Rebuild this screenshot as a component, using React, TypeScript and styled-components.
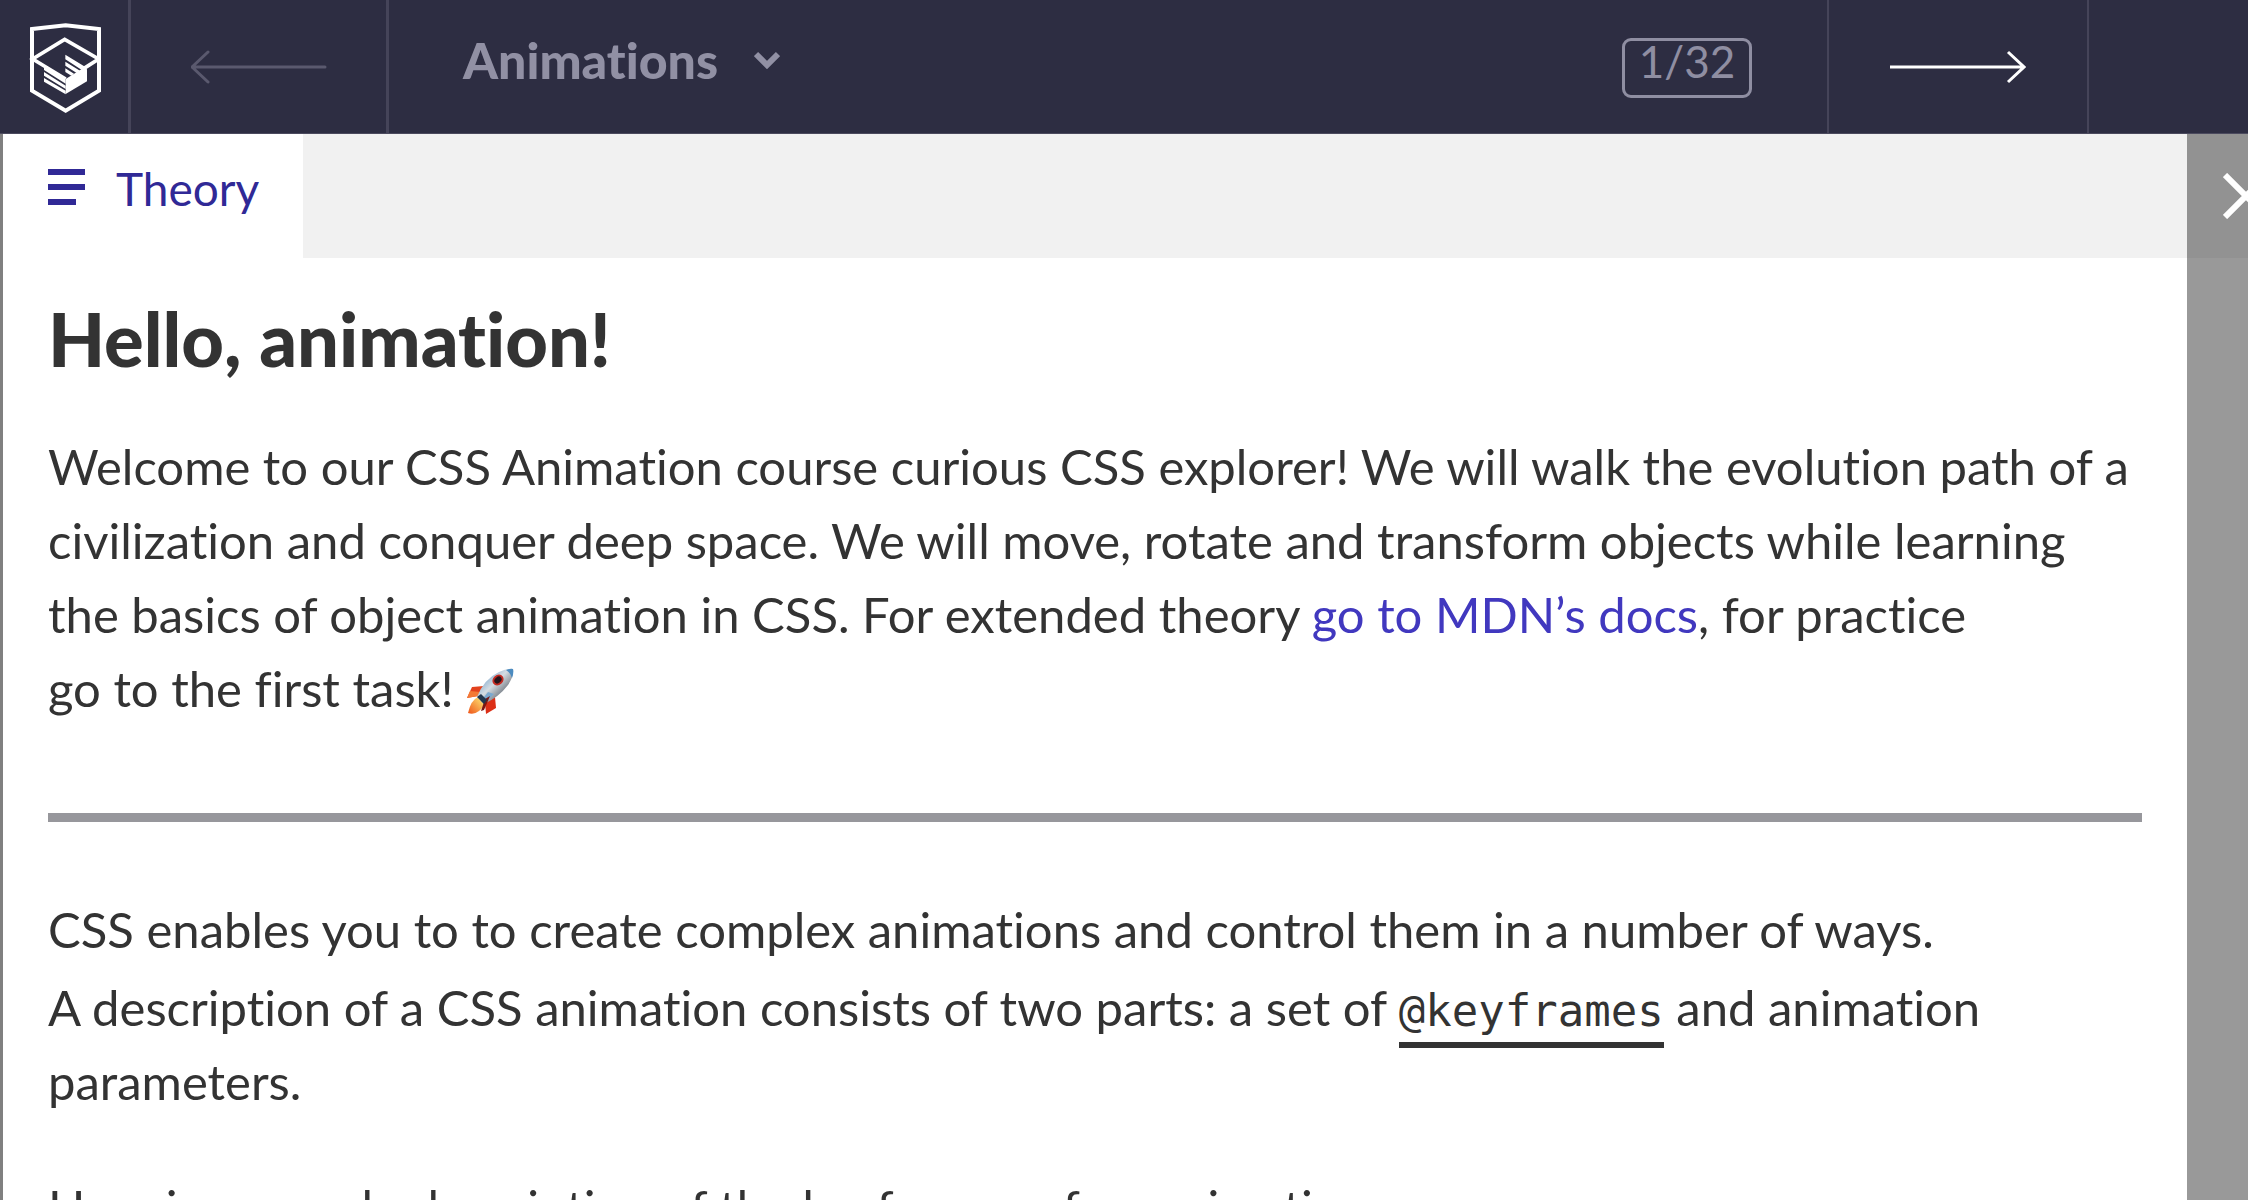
import React from "react";
import styled, { createGlobalStyle } from "styled-components";

const GlobalStyle = createGlobalStyle`
  *, *::before, *::after { box-sizing: border-box; }
  body {
    margin: 0;
    background: #999999;
    color: #333333;
    font-family: Lato, "Open Sans", sans-serif;
    font-variant-ligatures: none;
  }
`;

const Page = styled.div`
  display: flex;
  flex-direction: column;
  height: 100vh;
  overflow: hidden;
`;

const Header = styled.header`
  display: flex;
  flex: none;
  height: 134px;
  background: #2d2d42;
  border-bottom: 1px solid #4b4a5e;
`;

const HeaderLink = styled.a<{ $width: number; $bothSides?: boolean; $muted?: boolean }>`
  display: flex;
  flex: none;
  align-items: center;
  justify-content: center;
  width: ${(p) => p.$width}px;
  color: ${(p) => (p.$muted ? "#5a596e" : "#ffffff")};
  border: solid #454459;
  border-width: ${(p) => (p.$bothSides ? "0 2px" : "0 3px 0 0")};
`;

const CourseBar = styled.div`
  display: flex;
  flex: 1;
  align-items: flex-start;
  justify-content: space-between;
  min-width: 0;
  padding: 38px 75px 0 74px;
`;

const CourseButton = styled.button`
  display: flex;
  align-items: center;
  gap: 36px;
  padding: 0;
  border: 0;
  background: none;
  color: #9190a4;
  font: 900 50px/44px Lato, sans-serif;
  font-variant-ligatures: none;
  cursor: pointer;
`;

const Counter = styled.span`
  width: 130px;
  height: 60px;
  border: 3px solid #8f8ea2;
  border-radius: 9px;
  color: #8f8ea2;
  font-size: 44px;
  line-height: 40px;
  text-align: center;
`;

const HeaderEnd = styled.div`
  flex: none;
  width: 159px;
`;

const Workspace = styled.div`
  display: flex;
  flex: 1;
  min-height: 0;
`;

const Edge = styled.div`
  flex: none;
  width: 3px;
  background: #808080;
`;

const Panel = styled.main`
  flex: 1;
  min-width: 0;
  overflow: hidden;
  background: #ffffff;
`;

const TabBar = styled.div`
  display: flex;
  height: 124px;
  background: #f1f1f1;
`;

const Tab = styled.button`
  display: flex;
  align-items: flex-start;
  gap: 31px;
  padding: 33px 44px 0 45px;
  border: 0;
  background: #ffffff;
  color: #302996;
  font: 400 46px/44px Lato, sans-serif;
  cursor: pointer;

  svg { margin-top: 2px; }
`;

const Article = styled.article`
  padding: 46px 45px;
  font-size: 49px;
  line-height: 74px;
`;

const Title = styled.h1`
  margin: 0 0 55px;
  font-size: 74px;
  font-weight: 900;
  line-height: 70px;
`;

const Paragraph = styled.p`
  margin: 0 0 52px;
`;

const Rule = styled.hr`
  height: 9px;
  margin: 88px 0 70px;
  border: 0;
  background: #97979c;
`;

const DocsLink = styled.a`
  color: #4138bf;
  text-decoration: none;
`;

const Code = styled.code`
  display: inline-block;
  margin-bottom: -10px;
  padding: 23px 0 9px;
  border-bottom: 6px solid #333333;
  font-family: "DejaVu Sans Mono", monospace;
  font-size: 44px;
  line-height: 44px;
`;

const RocketIcon = styled.svg`
  width: 48px;
  height: 48px;
  vertical-align: -8px;
`;

const SideBar = styled.aside`
  flex: none;
  width: 61px;
  overflow: hidden;
  background: #999999;
`;

const CloseButton = styled.button`
  display: flex;
  align-items: flex-start;
  width: 100%;
  height: 124px;
  padding: 39px 0 0 36px;
  border: 0;
  background: #929292;
  color: #ffffff;
  cursor: pointer;

  svg { flex: none; }
`;

function Logo() {
  return (
    <svg width="74" height="92" viewBox="81 62 222 276" fill="none" aria-hidden="true">
      <path d="M96 86 L197 75 L297 86 V271 L197 331 L96 271 Z" stroke="#fff" strokeWidth="12" />
      <path d="M252 204 L296 176 L194 117 L98 176 L197 236" stroke="#fff" strokeWidth="11" />
      <path d="M197 236 L250 203 L261 207 V243 L197 281 Z" fill="#fff" />
      <path d="M196 163 L260 202 L250 212 L196 177 Z M196 184 L240 211 L230 218 L196 196 Z M196 204 L222 220 L214 226 L196 215 Z" fill="#fff" />
      <path d="M132 198 L197 238 V250 L132 209 Z M132 215 L197 256 V266 L132 226 Z M132 233 L197 271 V282 L132 244 Z" fill="#fff" />
    </svg>
  );
}

function Arrow({ back }: { back?: boolean }) {
  return (
    <svg width="136" height="34" viewBox="0 0 136 34" fill="none" stroke="currentColor" strokeWidth="3" aria-hidden="true">
      {back ? <path d="M17 2 L1 17 L17 32 M1 17 H134" strokeLinecap="round" /> : <path d="M118 2 L134 17 L118 32 M0 17 H134" />}
    </svg>
  );
}

function Rocket() {
  return (
    <RocketIcon viewBox="0 0 48 48" role="img" aria-label="rocket">
      <defs>
        <linearGradient id="hull" x1="0" y1="0" x2="1" y2="1">
          <stop offset="0.1" stopColor="#5f97c8" />
          <stop offset="0.45" stopColor="#d5dce2" />
          <stop offset="0.65" stopColor="#8d949c" />
          <stop offset="1" stopColor="#3d4a58" />
        </linearGradient>
        <linearGradient id="flame" x1="1" y1="0" x2="0" y2="1">
          <stop offset="0" stopColor="#fff07a" />
          <stop offset="1" stopColor="#ef5318" />
        </linearGradient>
      </defs>
      <path d="M18 19 L6 20 L1 31 L12 29 Z" fill="#e3421d" />
      <path d="M1 31 L4 24 L14 25 L12 29 Z" fill="#f47a35" />
      <path d="M29 30 L30 41 L20 47 L19 36 Z" fill="#dc2f16" />
      <path d="M12 30 Q5 33 2 46 Q8 48 13 44 Q18 40 18 36 Z" fill="url(#flame)" />
      <path d="M11 30 Q18 12 33 5 Q41 1 47 2 Q48 9 42 18 Q33 30 18 37 Z" fill="url(#hull)" />
      <path d="M40 3 Q45 1 47 2 Q48 6 46 11 Q45 6 40 3 Z" fill="#4c8bc0" />
      <path d="M22 25 L28 27 L18 37 L15 34 Z" fill="#7ba8ce" />
      <path d="M19 32 L24 29 L18 43 L15 44 Z" fill="#7b1712" />
      <ellipse cx="32" cy="13" rx="6" ry="5" fill="#c42b22" transform="rotate(-40 32 13)" />
      <ellipse cx="32" cy="13" rx="4" ry="3" fill="#25141a" transform="rotate(-40 32 13)" />
      <path d="M11 30 L15 27 L21 33 L18 37 Z" fill="#23364c" />
    </RocketIcon>
  );
}

export default function App() {
  return (
    <Page>
      <GlobalStyle />
      <Header>
        <HeaderLink href="#home" aria-label="Home" $width={131}>
          <Logo />
        </HeaderLink>
        <HeaderLink href="#previous" aria-label="Previous" $width={258} $muted>
          <Arrow back />
        </HeaderLink>
        <CourseBar>
          <CourseButton type="button">
            Animations
            <svg width="26" height="18" viewBox="0 0 26 18" fill="none" aria-hidden="true">
              <path d="M2 3 L13 14 L24 3" stroke="currentColor" strokeWidth="6" />
            </svg>
          </CourseButton>
          <Counter>1/32</Counter>
        </CourseBar>
        <HeaderLink href="#next" aria-label="Next" $width={262} $bothSides>
          <Arrow />
        </HeaderLink>
        <HeaderEnd />
      </Header>
      <Workspace>
        <Edge />
        <Panel>
          <TabBar role="tablist">
            <Tab type="button" role="tab" aria-selected="true">
              <svg width="37" height="36" viewBox="0 0 37 36" fill="currentColor" aria-hidden="true">
                <path d="M0 0 H37 V6 H0 Z M0 15 H37 V21 H0 Z M0 30 H28 V36 H0 Z" />
              </svg>
              Theory
            </Tab>
          </TabBar>
          <Article>
            <Title>Hello, animation!</Title>
            <Paragraph>
              Welcome to our CSS Animation course curious CSS explorer! We will walk the evolution path of a
              <br />
              civilization and conquer deep space. We will move, rotate and transform objects while learning
              <br />
              the basics of object animation in CSS. For extended theory{" "}
              <DocsLink href="#docs">go to MDN’s docs</DocsLink>, for practice
              <br />
              go to the first task! <Rocket />
            </Paragraph>
            <Rule />
            <Paragraph>
              CSS enables you to to create complex animations and control them in a number of ways.
              <br />A description of a CSS animation consists of two parts: a set of <Code>@keyframes</Code> and
              animation
              <br />
              parameters.
            </Paragraph>
            <Paragraph>Here is a sample description of the keyframes of an animation:</Paragraph>
          </Article>
        </Panel>
        <SideBar>
          <CloseButton type="button" aria-label="Close">
            <svg width="46" height="46" viewBox="0 0 46 46" fill="none" aria-hidden="true">
              <path d="M2 2 L44 44 M44 2 L2 44" stroke="currentColor" strokeWidth="6" />
            </svg>
          </CloseButton>
        </SideBar>
      </Workspace>
    </Page>
  );
}
